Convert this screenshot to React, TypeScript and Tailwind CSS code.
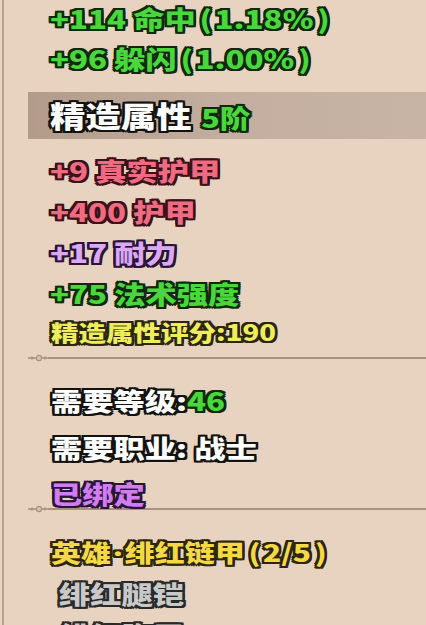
import React from "react";

const F = "font-['Noto_Sans_CJK_SC','Noto_Sans',sans-serif] font-black";
const LAT = "font-['Noto_Sans',sans-serif] font-black";

const OL_GREEN =
  "[text-shadow:2px_0_0_#10280b,-2px_0_0_#10280b,0_2px_0_#10280b,0_-2px_0_#10280b,2px_2px_0_#10280b,-2px_-2px_0_#10280b,2px_-2px_0_#10280b,-2px_2px_0_#10280b]";
const OL_PINK =
  "[text-shadow:2px_0_0_#3a1219,-2px_0_0_#3a1219,0_2px_0_#3a1219,0_-2px_0_#3a1219,2px_2px_0_#3a1219,-2px_-2px_0_#3a1219,2px_-2px_0_#3a1219,-2px_2px_0_#3a1219]";
const OL_PURPLE =
  "[text-shadow:2px_0_0_#2a1536,-2px_0_0_#2a1536,0_2px_0_#2a1536,0_-2px_0_#2a1536,2px_2px_0_#2a1536,-2px_-2px_0_#2a1536,2px_-2px_0_#2a1536,-2px_2px_0_#2a1536]";
const OL_YELLOW =
  "[text-shadow:2px_0_0_#2c2610,-2px_0_0_#2c2610,0_2px_0_#2c2610,0_-2px_0_#2c2610,2px_2px_0_#2c2610,-2px_-2px_0_#2c2610,2px_-2px_0_#2c2610,-2px_2px_0_#2c2610]";
const OL_DARK =
  "[text-shadow:2px_0_0_#141210,-2px_0_0_#141210,0_2px_0_#141210,0_-2px_0_#141210,2px_2px_0_#141210,-2px_-2px_0_#141210,2px_-2px_0_#141210,-2px_2px_0_#141210]";
const OL_GRAY =
  "[text-shadow:2px_0_0_#2a2a2a,-2px_0_0_#2a2a2a,0_2px_0_#2a2a2a,0_-2px_0_#2a2a2a,2px_2px_0_#2a2a2a,-2px_-2px_0_#2a2a2a,2px_-2px_0_#2a2a2a,-2px_2px_0_#2a2a2a]";

function Line({
  children,
  className = "",
  textClass = "",
}: {
  children: React.ReactNode;
  className?: string;
  textClass?: string;
}) {
  return (
    <div className={`flex items-center ${className}`}>
      <span
        className={`inline-block origin-left scale-x-[1.25] whitespace-nowrap leading-none ${F} ${textClass}`}
      >
        {children}
      </span>
    </div>
  );
}

function Divider({ className = "" }: { className?: string }) {
  return (
    <div className={`flex h-[10px] items-center pl-[24px] ${className}`}>
      <svg width="20" height="10" viewBox="0 0 20 10" className="shrink-0">
        <line x1="0" y1="5" x2="20" y2="5" stroke="#a8927f" strokeWidth="1.5" />
        <circle cx="4" cy="5" r="1.6" fill="#a8927f" />
        <circle cx="11" cy="5" r="2.6" fill="#d9c4b1" stroke="#a8927f" strokeWidth="1.2" />
        <circle cx="17" cy="5" r="1.4" fill="#a8927f" />
      </svg>
      <div className="h-[2px] flex-1 bg-[#a8927f]" />
    </div>
  );
}

export default function App() {
  return (
    <div className="h-[625px] w-[426px] overflow-hidden bg-[#e7d3c0] pl-[2px]">
      <div className="h-full border-l-2 border-[#b7a18f]">
        <div>
          <Line className="h-[37px] pl-[46px]" textClass={`text-[25px] text-[#48d83c] ${OL_GREEN}`}>
            +114 命中<span className="ml-[3px] mr-[2px]">(</span>1.18%<span className="ml-[3px]">)</span>
          </Line>
          <Line className="h-[42px] pl-[46px]" textClass={`text-[25px] text-[#48d83c] ${OL_GREEN}`}>
            +96 躲闪<span className="ml-[3px] mr-[2px]">(</span>1.00%<span className="ml-[3px]">)</span>
          </Line>

          <div className="ml-[24px] mt-[13px] flex h-[47px] items-center bg-gradient-to-r from-[#b29b8b] via-[#c3ae9f] to-[#c8b4a5] pl-[22px]">
            <span
              className={`inline-block origin-left scale-x-[1.22] whitespace-nowrap leading-none ${F}`}
            >
              <span className={`text-[29px] text-white ${OL_DARK}`}>精造属性</span>
              <span className={`ml-[8px] text-[25px] text-[#48d83c] ${OL_GREEN}`}>5阶</span>
            </span>
          </div>

          <Line className="mt-[11px] h-[41px] pl-[46px]" textClass={`text-[25px] text-[#ee6b82] ${OL_PINK}`}>
            +9 真实护甲
          </Line>
          <Line className="h-[41px] pl-[46px]" textClass={`text-[25px] text-[#ee6b82] ${OL_PINK}`}>
            +400 护甲
          </Line>
          <Line className="h-[41px] pl-[46px]" textClass={`text-[25px] text-[#dba8f3] ${OL_PURPLE}`}>
            +17 耐力
          </Line>
          <Line className="h-[41px] pl-[46px]" textClass={`text-[25px] text-[#48d83c] ${OL_GREEN}`}>
            +75 法术强度
          </Line>
          <Line className="h-[34px] pl-[47px]" textClass={`text-[22px] text-[#eeee5c] ${OL_YELLOW}`}>
            精造属性评分:190
          </Line>

          <Divider className="mt-[5px]" />

          <Line className="mt-[21px] h-[32px] pl-[47px]" textClass={`text-[25px] text-white ${OL_DARK}`}>
            需要等级:<span className={`text-[#48d83c] ${OL_GREEN}`}>46</span>
          </Line>
          <Line className="mt-[15px] h-[32px] pl-[47px]" textClass={`text-[25px] text-white ${OL_DARK}`}>
            需要职业: 战士
          </Line>
          <Line className="mt-[14px] h-[32px] pl-[47px]" textClass={`text-[25px] text-[#d07df1] ${OL_PURPLE}`}>
            已绑定
          </Line>

          <Divider className="-mt-[5px]" />

          <Line className="mt-[22px] h-[32px] pl-[47px]" textClass={`text-[24px] text-[#f5d843] ${OL_YELLOW}`}>
            英雄<span className={`mx-[2px] ${LAT}`}>·</span>绯红链甲<span className="ml-[3px] mr-[2px]">(</span>2/5<span className="ml-[3px]">)</span>
          </Line>
          <Line className="mt-[9px] h-[32px] pl-[55px]" textClass={`text-[25px] text-[#c9c9c9] ${OL_GRAY}`}>
            绯红腿铠
          </Line>
          <Line className="mt-[9px] h-[32px] pl-[55px]" textClass={`text-[25px] text-[#c9c9c9] ${OL_GRAY}`}>
            绯红胸甲
          </Line>
        </div>
      </div>
    </div>
  );
}
